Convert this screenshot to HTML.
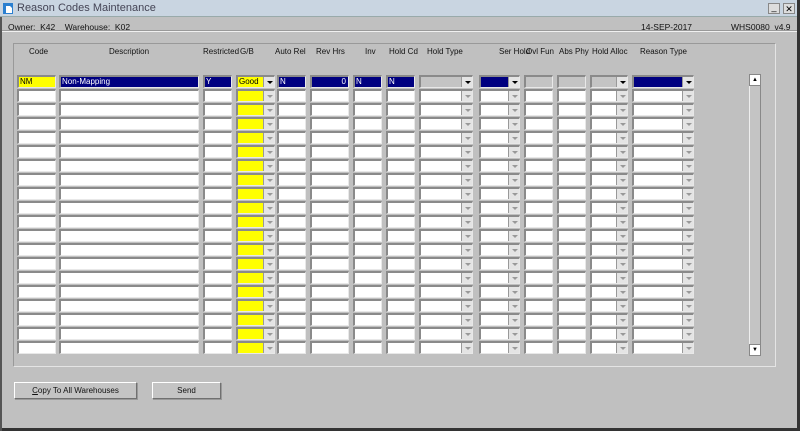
<!DOCTYPE html>
<html><head><meta charset="utf-8">
<style>
*{margin:0;padding:0;box-sizing:border-box}
body{width:800px;height:431px;overflow:hidden;background:#c0c0c0;font-family:"Liberation Sans",sans-serif;position:relative}
.a{position:absolute}
#title{left:0;top:0;width:800px;height:17px;background:#c9d5e1;border-bottom:1px solid #9aa;}
#title span{position:absolute;left:17px;top:2px;font-size:11px;color:#445}
.lbl{font-size:8px;color:#111;white-space:nowrap}
.f{position:absolute;height:13px;background:#fff;border-top:2px solid #8a8a8a;border-left:2px solid #8a8a8a;border-bottom:1px solid #e8e8e8;border-right:1px solid #e8e8e8;font-size:8px;line-height:10px;padding-left:1px;color:#fff;overflow:hidden}
.dd{position:absolute;right:0;top:0;width:11px;height:10px;background:#e4e4e4;border-left:1px solid #999}
.dd:after{content:"";position:absolute;left:3px;top:4px;border-left:3px solid transparent;border-right:3px solid transparent;border-top:3px solid #999}
.dd.k:after{border-top-color:#000}
.btn{position:absolute;height:17px;background:#c4c4c4;border:1px solid #fff;border-right-color:#707070;border-bottom-color:#707070;box-shadow:1px 1px 0 #999;font-size:8px;text-align:center;line-height:15px;color:#111}
</style></head><body>
<div id="title" class="a"><svg class="a" style="left:2px;top:2px" width="13" height="13"><rect x="1" y="1" width="10" height="11" fill="#2a7fd0"/><path d="M4 4h4l2 2v5H4z" fill="#fff"/></svg><span>Reason Codes Maintenance</span>
<div class="a" style="left:768px;top:3px;width:12px;height:11px;background:#ddd;border:1px solid #888;font-size:9px;line-height:7px;text-align:center">_</div>
<div class="a" style="left:783px;top:3px;width:12px;height:11px;background:#ddd;border:1px solid #888;font-size:9px;line-height:10px;text-align:center">✕</div></div>
<div class="a lbl" style="left:8px;top:22px;font-size:8.5px">Owner:&nbsp; K42 &nbsp;&nbsp; Warehouse:&nbsp; K02</div>
<div class="a lbl" style="left:641px;top:22px;font-size:8.5px">14-SEP-2017</div>
<div class="a lbl" style="left:731px;top:22px;font-size:8.5px">WHS0080&nbsp; v4.9</div>
<div class="a" style="left:0;top:31px;width:800px;height:1px;background:#f0f0f0"></div>
<div class="a" style="left:0;top:30px;width:800px;height:1px;background:#999"></div>
<div class="a" style="left:13px;top:43px;width:763px;height:324px;border:1px solid #e4e4e4;border-top-color:#999;border-left-color:#999"></div>
<div class="a" style="left:0;top:428px;width:800px;height:3px;background:#333"></div>
<div class="a" style="left:797px;top:0;width:3px;height:431px;background:#333"></div>
<div class="a" style="left:0;top:17px;width:2px;height:414px;background:#555"></div>
<div id="g"></div>
<div class="btn" style="left:14px;top:382px;width:123px"><u>C</u>opy To All Warehouses</div>
<div class="btn" style="left:152px;top:382px;width:69px">Send</div>
<div class="a" style="left:749px;top:86px;width:12px;height:258px;background:#c4c4c4;border-left:1px solid #eee;border-right:1px solid #888"></div>
<div class="a" style="left:749px;top:74px;width:12px;height:12px;background:#fff;border:1px solid #888;font-size:6px;text-align:center;line-height:10px">▲</div>
<div class="a" style="left:749px;top:344px;width:12px;height:12px;background:#fff;border:1px solid #888;font-size:6px;text-align:center;line-height:10px">▼</div>
<script>
var cols=[[17,39,'Code',0],[59,140,'Description',0],[203,29,'Restricted',0],[236,39,'G/B',1],[277,29,'Auto Rel',0],[310,39,'Rev Hrs',0],[353,29,'Inv',0],[386,29,'Hold Cd',0],[419,54,'Hold Type',1],[479,41,'Ser Hold',1],[524,29,'Ovl Fun',0],[557,29,'Abs Phy',0],[590,38,'Hold Alloc',1],[632,62,'Reason Type',1]];
var lx=[29,109,203,240,275,316,365,389,427,499,526,559,592,640];
var first=['NM','Non-Mapping','Y','Good','N','0','N','N','','','','','',''];
var h='';
cols.forEach(function(c,i){h+='<div class="a lbl" style="left:'+lx[i]+'px;top:47px">'+c[2]+'</div>';});
for(var r=0;r<20;r++){var y=75+r*14;
cols.forEach(function(c,i){var bg='#fff',col='#fff',t='';
if(i==3)bg='#ffff00';
if(r==0){t=first[i];bg='#000080';
 if(i==0){bg='#ffff00';col='#000'} if(i==3){bg='#ffff00';col='#000'}
 if(i==8||i==10||i==11||i==12)bg='#c4c4c4';}
var st='left:'+c[0]+'px;top:'+y+'px;width:'+c[1]+'px;background:'+bg+';color:'+col+(i==5?';text-align:right;padding-right:2px':'');
h+='<div class="f" style="'+st+'">'+t+(c[3]?'<div class="dd'+(r==0?' k':'')+'"></div>':'')+'</div>';});}
document.getElementById('g').innerHTML=h;
</script>
</body></html>
